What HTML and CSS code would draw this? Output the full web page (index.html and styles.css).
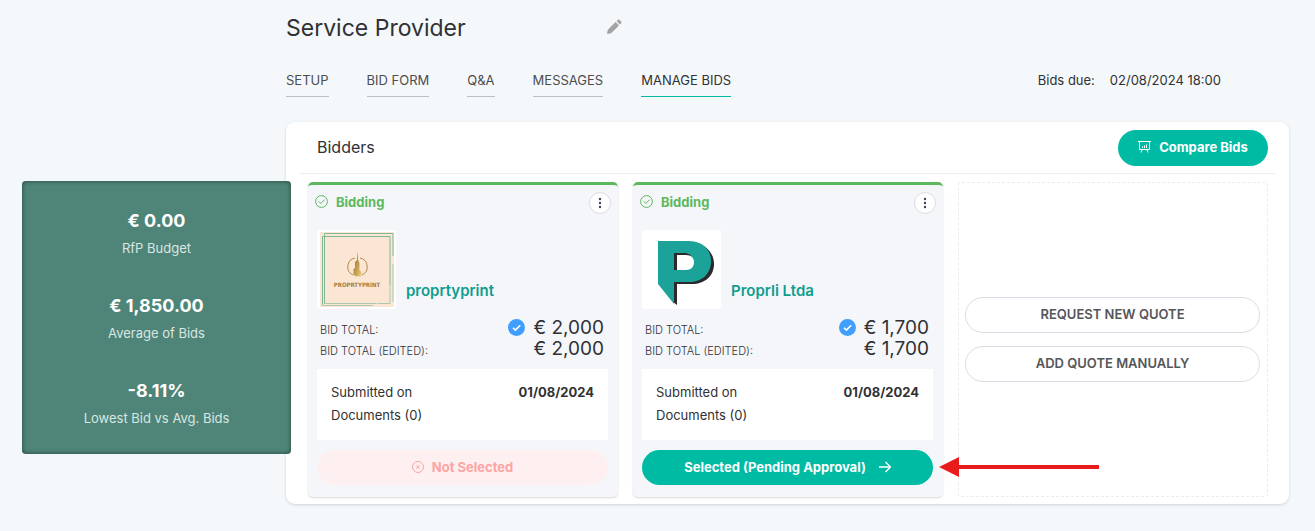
FILE: index.html
```html
<!DOCTYPE html>
<html lang="en">
  <head>
    <meta charset="UTF-8" />
    <meta name="viewport" content="width=device-width, initial-scale=1.0" />
    <title>Service Provider - Manage Bids</title>
    <link rel="stylesheet" href="styles.css" />
  </head>
  <body>
    <div class="page">
      <aside class="stats">
        <div class="stat">
          <strong>€ 0.00</strong>
          <span>RfP Budget</span>
        </div>
        <div class="stat">
          <strong>€ 1,850.00</strong>
          <span>Average of Bids</span>
        </div>
        <div class="stat">
          <strong>-8.11%</strong>
          <span>Lowest Bid vs Avg. Bids</span>
        </div>
      </aside>

      <main>
        <div class="title">
          <h1>Service Provider</h1>
          <button type="button" class="edit" aria-label="Edit title">
            <svg width="16" height="16" viewBox="0 0 16 16" fill="#a3a3a3">
              <path d="M1 15l.8-4.2L9.6 3l3.4 3.4-7.800 7.800z" />
              <path d="M10.500 2.100l1.300-1.200c.5-.5 1.200-.5 1.700 0l1.600 1.600c.5.5.5 1.200 0 1.700l-1.200 1.300z" />
            </svg>
          </button>
        </div>

        <div class="toolbar">
          <nav>
            <a href="#setup">SETUP</a>
            <a href="#form">BID FORM</a>
            <a href="#qa">Q&amp;A</a>
            <a href="#messages">MESSAGES</a>
            <a href="#bids" class="active">MANAGE BIDS</a>
          </nav>
          <div class="due"><span>Bids due:</span><span>02/08/2024 18:00</span></div>
        </div>

        <section class="card">
          <header>
            <h2>Bidders</h2>
            <button type="button" class="btn compare">
              <svg width="13" height="12" viewBox="0 0 13 12" fill="none" stroke="white">
                <path d="M0 .5h13M1.500 1v7.500h10V1M4 9l-1 2.500M9 9l1 2.500M4.500 7V5.500M6.500 7V4.500M8.500 7V3.500" />
              </svg>
              Compare Bids
            </button>
          </header>

          <div class="bids">
            <article class="bid">
              <div class="status">
                <svg width="13" height="13" viewBox="0 0 13 13" fill="none" stroke="#5cb85c">
                  <circle cx="6.500" cy="6.500" r="5.900" />
                  <path d="M3.700 6.300l2.200 2.200 3.600-3.800" />
                </svg>
                <span>Bidding</span>
                <button type="button" class="menu" aria-label="Bid options">
                  <svg width="4" height="12" viewBox="0 0 4 12" fill="#42425c">
                    <circle cx="2" cy="2" r="1.200" />
                    <circle cx="2" cy="6" r="1.200" />
                    <circle cx="2" cy="10" r="1.200" />
                  </svg>
                </button>
              </div>
              <div class="vendor">
                <svg class="logo" viewBox="0 0 79 79">
                  <defs>
                    <linearGradient id="gold" x1="0" y1="0" x2="1" y2="1">
                      <stop offset="0" stop-color="#92682c" />
                      <stop offset=".6" stop-color="#c7a04f" />
                      <stop offset="1" stop-color="#ead58c" />
                    </linearGradient>
                  </defs>
                  <path fill="#fbe6d4" d="M3 2h74v75H3z" />
                  <g fill="none" stroke="#80b795">
                    <path d="M5.500 75V6.500H73V55" />
                    <path stroke="#a9c9b0" d="M73 55v18.500H61M5.500 75.500H56M7.500 73.500H60M76 34v38" />
                    <path d="M7.500 73.500V3.500H76V26" />
                  </g>
                  <path d="M38 28a9 9 0 0 0-2 17M43 28a9 9 0 0 1 2 17" fill="none" stroke="#b28b48" />
                  <path d="M36.500 45v-6l1.500-1v-6l2-2 .5-9 .7 9 1.300 3v7l2 2v4q-4 1.500-8-1z" fill="url(#gold)" />
                  <text x="40" y="57" text-anchor="middle">PROPRTYPRINT</text>
                </svg>
                <a href="#proprtyprint">proprtyprint</a>
              </div>
              <dl class="totals">
                <dt>BID TOTAL:</dt>
                <dd>
                  <svg width="17" height="17" viewBox="0 0 17 17">
                    <circle cx="8.500" cy="8.500" r="8.500" fill="#409eff" />
                    <path d="M5 8.700l2.400 2.400 4.800-4.800" fill="none" stroke="white" stroke-width="1.600" />
                  </svg>
                  € 2,000
                </dd>
                <dt>BID TOTAL (EDITED):</dt>
                <dd>€ 2,000</dd>
              </dl>
              <div class="details">
                <div><span>Submitted on</span><strong>01/08/2024</strong></div>
                <div>Documents (0)</div>
              </div>
              <div class="action">
                <button type="button" class="btn rejected" disabled>
                  <svg width="12" height="12" viewBox="0 0 12 12" fill="none" stroke="#fba5a5">
                    <circle cx="6" cy="6" r="5.500" />
                    <path d="M4.200 4.200l3.600 3.600M7.800 4.200L4.200 7.800" />
                  </svg>
                  Not Selected
                </button>
              </div>
            </article>

            <article class="bid">
              <div class="status">
                <svg width="13" height="13" viewBox="0 0 13 13" fill="none" stroke="#5cb85c">
                  <circle cx="6.500" cy="6.500" r="5.900" />
                  <path d="M3.700 6.300l2.200 2.200 3.600-3.800" />
                </svg>
                <span>Bidding</span>
                <button type="button" class="menu" aria-label="Bid options">
                  <svg width="4" height="12" viewBox="0 0 4 12" fill="#42425c">
                    <circle cx="2" cy="2" r="1.200" />
                    <circle cx="2" cy="6" r="1.200" />
                    <circle cx="2" cy="10" r="1.200" />
                  </svg>
                </button>
              </div>
              <div class="vendor">
                <svg class="logo" viewBox="0 0 79 79">
                  <path fill="#2a2a2c" d="M50 12c14 2 22 11 22 22 0 12-9 20-22 20H35v21l-4-3V50z" />
                  <path fill="#1ba39a" d="M16 11h30c14 0 23 8 23 20 0 13-9 21-22 21H32v22L16 54z" />
                  <path fill="#2a2a2c" d="M32 23h12l5 2-14 15h-3z" />
                  <path fill="white" d="M35 25h9c5 0 8 3 8 7 0 5-3 8-8 8h-9z" />
                </svg>
                <a href="#proprli">Proprli Ltda</a>
              </div>
              <dl class="totals">
                <dt>BID TOTAL:</dt>
                <dd>
                  <svg width="17" height="17" viewBox="0 0 17 17">
                    <circle cx="8.500" cy="8.500" r="8.500" fill="#409eff" />
                    <path d="M5 8.700l2.400 2.400 4.800-4.800" fill="none" stroke="white" stroke-width="1.600" />
                  </svg>
                  € 1,700
                </dd>
                <dt>BID TOTAL (EDITED):</dt>
                <dd>€ 1,700</dd>
              </dl>
              <div class="details">
                <div><span>Submitted on</span><strong>01/08/2024</strong></div>
                <div>Documents (0)</div>
              </div>
              <div class="action">
                <button type="button" class="btn selected">
                  Selected (Pending Approval)
                  <svg width="12" height="12" viewBox="0 0 12 12" fill="none" stroke="white" stroke-width="1.300">
                    <path d="M0 6h11.500M6.500 1l5 5-5 5" />
                  </svg>
                </button>
                <svg class="pointer" width="160" height="20" viewBox="0 0 160 20" fill="#e81c1c">
                  <path d="M0 10L20 0v8h140v4H20v8z" />
                </svg>
              </div>
            </article>

            <div class="add">
              <button type="button" class="btn outline">REQUEST NEW QUOTE</button>
              <button type="button" class="btn outline">ADD QUOTE MANUALLY</button>
            </div>
          </div>
        </section>
      </main>
    </div>
  </body>
</html>
```

FILE: styles.css
```css
* {
  box-sizing: border-box;
}

body {
  font-family: Inter, "Liberation Sans", sans-serif;
  font-size: 13px;
  margin: 0;
  background-color: #f4f8fb;
  color: #303133;
}

.page {
  display: flex;
  align-items: flex-start;
  padding: 12px 26px 27px 22px;
}

/* Stats panel, laps slightly over the bidders card */
.stats {
  flex: 0 0 269px;
  display: flex;
  flex-direction: column;
  gap: 35px;
  margin: 169px -5px 0 0;
  padding: 27px 10px 26px;
  background-color: #4f8578;
  border-radius: 4px;
  box-shadow: inset 0 0 5px rgba(0, 0, 0, 0.5);
  color: white;
  text-align: center;
  z-index: 1;
}

.stat {
  display: flex;
  flex-direction: column;
  gap: 4px;
}

.stat strong {
  font-size: 18px;
  line-height: 26px;
}

.stat span {
  line-height: 20px;
  color: #d9e6e2;
}

main {
  flex: 1;
  min-width: 0;
}

.title {
  display: flex;
  align-items: center;
  justify-content: space-between;
  width: 336px;
}

h1 {
  margin: 0;
  font-size: 23px;
  font-weight: 400;
  line-height: 32px;
}

.edit {
  display: flex;
  padding: 0 0 2px;
  border: none;
  background: none;
  cursor: pointer;
}

.toolbar {
  display: flex;
  justify-content: space-between;
  margin-top: 24px;
  padding-right: 68px;
}

nav {
  display: flex;
  gap: 38px;
}

nav a {
  height: 29px;
  line-height: 25px;
  border-bottom: 1px solid #bfc0c2;
  color: #4d4d4f;
  text-decoration: none;
}

nav a.active {
  border-color: #00bba4;
  color: #303133;
}

.due {
  display: flex;
  gap: 15px;
  line-height: 25px;
}

.card {
  margin-top: 25px;
  padding-bottom: 7px;
  background-color: white;
  border-radius: 9px;
  box-shadow: 0 1px 3px rgba(0, 0, 0, 0.15);
}

.card header {
  display: flex;
  align-items: center;
  justify-content: space-between;
  height: 52px;
  margin: 0 14px;
  padding: 0 7px 0 17px;
  border-bottom: 1px solid #ebedf2;
}

h2 {
  margin: 0;
  padding-bottom: 2px;
  font-size: 16px;
  font-weight: 400;
}

.btn {
  display: flex;
  align-items: center;
  justify-content: center;
  gap: 8px;
  width: 100%;
  height: 35px;
  padding: 0 6px 2px;
  border: none;
  border-radius: 18px;
  font-family: inherit;
  font-size: 13px;
  font-weight: 700;
  cursor: pointer;
}

.compare,
.selected {
  background-color: #00bba4;
  color: white;
}

.compare {
  width: 150px;
  height: 36px;
}

.selected {
  gap: 13px;
}

.rejected {
  background-color: #fef0f0;
  color: #fba5a5;
  cursor: default;
}

.outline {
  height: 36px;
  border: 1px solid #dcdce6;
  background-color: white;
  color: #55565a;
  font-weight: 600;
}

.bids {
  display: grid;
  grid-template-columns: repeat(3, 1fr);
  gap: 15px;
  padding: 8px 21px 0 22px;
}

.bid {
  padding: 6px 10px 12px 9px;
  border-top: 3px solid #5cb85c;
  border-radius: 5px;
  background-color: #f5f6fa;
  box-shadow: 0 1px 2px rgba(0, 0, 0, 0.15);
}

.status {
  display: flex;
  align-items: center;
  gap: 8px;
  height: 23px;
  margin: 0 -3px 0 -2px;
  color: #5cb85c;
  font-weight: 700;
}

.status > svg,
.status span {
  margin-bottom: 2px;
}

.menu {
  display: flex;
  align-items: center;
  justify-content: center;
  width: 22px;
  height: 22px;
  margin-left: auto;
  padding: 0;
  border: 1px solid #dcdce6;
  border-radius: 50%;
  background-color: white;
  cursor: pointer;
}

.vendor {
  display: flex;
  align-items: flex-end;
  gap: 10px;
  margin-top: 16px;
}

.vendor a {
  color: #0f9d8f;
  font-size: 15px;
  font-weight: 600;
  line-height: 20px;
  padding-bottom: 8px;
  text-decoration: none;
}

.logo {
  width: 79px;
  height: 79px;
  border-radius: 3px;
  background-color: white;
}

.logo text {
  font-family: "Liberation Sans Narrow", "DejaVu Sans Condensed", "Liberation Sans", sans-serif;
  font-size: 6px;
  font-weight: 700;
  fill: #a67c43;
}

.totals {
  display: grid;
  grid-template-columns: 1fr auto;
  margin: 8px 4px 0 3px;
  line-height: 21px;
}

.totals dt {
  padding-top: 3px;
  height: 21px;
  font-size: 11px;
  font-weight: 300;
}

.totals dd {
  display: flex;
  align-items: center;
  justify-content: flex-end;
  gap: 8px;
  height: 21px;
  margin: 0;
  font-size: 19px;
}

.details {
  margin: 10px 0;
  padding: 12px 14px 13px;
  background-color: white;
  line-height: 23px;
}

.details div {
  display: flex;
  justify-content: space-between;
}

.details strong {
  font-weight: 700;
}

.action {
  position: relative;
}

/* Arrow drawn across the neighbouring column */
.pointer {
  position: absolute;
  top: 7px;
  left: calc(100% + 6px);
  z-index: 1;
}

.add {
  display: flex;
  flex-direction: column;
  justify-content: center;
  gap: 13px;
  padding: 0 7px 0 6px;
  border: 1px dashed #ebebf0;
  border-radius: 4px;
}
```
